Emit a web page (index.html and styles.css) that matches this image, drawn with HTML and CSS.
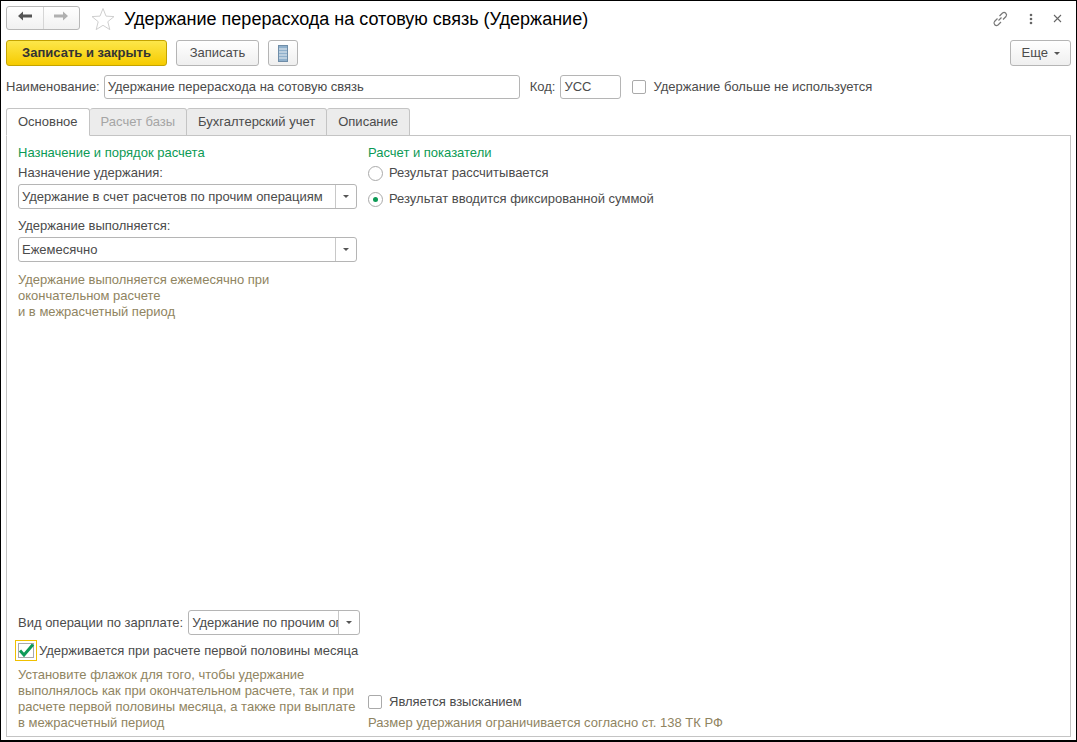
FILE: index.html
```html
<!DOCTYPE html>
<html lang="ru">

<head>
    <meta charset="UTF-8">
    <title>Удержание перерасхода на сотовую связь (Удержание)</title>
    <link rel="stylesheet" href="styles.css">
</head>

<body>
    <div class="window">
        <!--заголовок-->
        <header class="title-bar">
            <div class="nav-group">
                <button class="nav-btn">
                    <svg width="16" height="12" viewBox="0 0 16 12"><path d="M1 6l5-4.5V4.5h9v3H6v3z" fill="#555"/></svg>
                </button>
                <button class="nav-btn">
                    <svg width="16" height="12" viewBox="0 0 16 12"><path d="M15 6l-5-4.5V4.5H1v3h9v3z" fill="#b0b0b0"/></svg>
                </button>
            </div>
            <svg class="star" width="24" height="24" viewBox="0 0 24 24"><path d="M12 1.5l3 7.6 8 .5-6.200 5.100 2 7.900L12 18.300l-6.800 4.300 2-7.900L1 9.600l8-.5z" fill="#fff" stroke="#cfcfcf"/></svg>
            <h1 class="title">Удержание перерасхода на сотовую связь (Удержание)</h1>
            <div class="title-tools">
                <svg width="18" height="18" viewBox="0 0 18 18" fill="none" stroke="#777" stroke-width="1.200"><path d="M7.500 10.500l3-3M6.500 8.500l-3 3a2.500 2.500 0 0 0 3.500 3.500l3-3M8.500 6l3-3a2.500 2.500 0 0 1 3.500 3.500l-3 3"/></svg>
                <svg width="4" height="12" viewBox="0 0 4 12" fill="#666"><circle cx="2" cy="2" r="1.300"/><circle cx="2" cy="6" r="1.300"/><circle cx="2" cy="10" r="1.300"/></svg>
                <svg width="9" height="9" viewBox="0 0 9 9" stroke="#666" stroke-width="1.100"><path d="M1 1l7 7M8 1L1 8"/></svg>
            </div>
        </header>

        <!--командная панель-->
        <div class="command-bar">
            <button class="btn btn-primary">Записать и закрыть</button>
            <button class="btn btn-save">Записать</button>
            <button class="btn btn-icon">
                <svg width="10" height="17" viewBox="0 0 10 17"><rect x=".5" y=".5" width="9" height="16" fill="#8fb0cc" stroke="#6f8da8"/><path d="M1 4h8M1 7h8M1 10h8M1 13h8" stroke="#e8eef3"/></svg>
            </button>
            <button class="btn btn-more">Еще <i class="caret"></i></button>
        </div>

        <!--шапка-->
        <div class="head-row">
            <label class="label">Наименование:</label>
            <div class="field field-name">Удержание перерасхода на сотовую связь</div>
            <label class="label label-code">Код:</label>
            <div class="field field-code">УСС</div>
            <span class="check"></span>
            <span class="label">Удержание больше не используется</span>
        </div>

        <!--закладки-->
        <div class="tabs">
            <div class="tab tab-active">Основное</div>
            <div class="tab tab-disabled">Расчет базы</div>
            <div class="tab">Бухгалтерский учет</div>
            <div class="tab">Описание</div>
        </div>

        <section class="panel">
            <div class="col col-left">
                <h2 class="group-title">Назначение и порядок расчета</h2>
                <div class="label stack-label">Назначение удержания:</div>
                <div class="select select-full">
                    <span class="select-text">Удержание в счет расчетов по прочим операциям</span>
                    <span class="select-arrow"><i class="caret"></i></span>
                </div>
                <div class="label stack-label second">Удержание выполняется:</div>
                <div class="select select-full">
                    <span class="select-text">Ежемесячно</span>
                    <span class="select-arrow"><i class="caret"></i></span>
                </div>
                <p class="hint hint-period">Удержание выполняется ежемесячно при<br>окончательном расчете<br>и в межрасчетный период</p>

                <div class="col-bottom">
                    <div class="op-row">
                        <span class="label">Вид операции по зарплате:</span>
                        <div class="select select-op">
                            <span class="select-text">Удержание по прочим операциям</span>
                            <span class="select-arrow"><i class="caret"></i></span>
                        </div>
                    </div>
                    <div class="check-row">
                        <span class="check-focus">
                            <svg width="17" height="15" viewBox="0 0 17 15"><path d="M2 7.500l4 4.500L15 1.500" fill="none" stroke="#0f9a58" stroke-width="3"/></svg>
                        </span>
                        <span class="label">Удерживается при расчете первой половины месяца</span>
                    </div>
                    <p class="hint">Установите флажок для того, чтобы удержание<br>выполнялось как при окончательном расчете, так и при<br>расчете первой половины месяца, а также при выплате<br>в межрасчетный период</p>
                </div>
            </div>

            <div class="col col-right">
                <h2 class="group-title">Расчет и показатели</h2>
                <div class="radio-row">
                    <span class="radio"></span>
                    <span class="label">Результат рассчитывается</span>
                </div>
                <div class="radio-row radio-row-second">
                    <span class="radio radio-on"></span>
                    <span class="label">Результат вводится фиксированной суммой</span>
                </div>

                <div class="col-bottom">
                    <div class="check-row-plain">
                        <span class="check"></span>
                        <span class="label">Является взысканием</span>
                    </div>
                    <p class="hint">Размер удержания ограничивается согласно ст. 138 ТК РФ</p>
                </div>
            </div>
        </section>
    </div>
</body>

</html>
```

FILE: styles.css
```css
html,
body,
h1,
h2,
p {
    margin: 0;
    padding: 0;
}

html,
body {
    width: 1077px;
    height: 742px;
    overflow: hidden;
    background: #000;
}

body {
    color: #4b4b4b;
    font: 13px/16px "Liberation Sans", Arial, sans-serif;
}

/*окно*/
.window {
    display: flex;
    flex-direction: column;
    box-sizing: border-box;
    width: 1075px;
    height: 739px;
    margin: 1px 0 0 1px;
    padding: 0 5px 3px;
    background: #fff;
}

/*заголовок*/
.title-bar {
    display: flex;
    align-items: center;
    height: 35px;
    flex: none;
}

.nav-group {
    display: flex;
    box-sizing: border-box;
    width: 74px;
    height: 24px;
    margin-top: -2px;
    border: 1px solid #b8b8b8;
    border-radius: 3px;
    background: linear-gradient(#fff, #f1f1f1);
}

.nav-btn {
    flex: 1;
    padding: 0;
    border: 0;
    background: none;
}

.nav-btn + .nav-btn {
    border-left: 1px solid #d6d6d6;
}

.star {
    margin-left: 11px;
}

.title {
    margin-left: 9px;
    color: #000;
    font: normal 18px/24px "Liberation Sans", Arial, sans-serif;
}

.title-tools {
    display: flex;
    align-items: center;
    gap: 20px;
    margin-left: auto;
    padding-right: 9px;
}

/*командная панель*/
.command-bar {
    display: flex;
    align-items: center;
    flex: none;
    height: 26px;
    margin-top: 4px;
}

.btn {
    box-sizing: border-box;
    height: 26px;
    padding: 0;
    border: 1px solid #b5b5b5;
    border-radius: 3px;
    background: linear-gradient(#fff, #efefef);
    color: #4b4b4b;
    font: 13px/16px "Liberation Sans", Arial, sans-serif;
}

.btn-primary {
    width: 161px;
    border-color: #c4a400;
    background: linear-gradient(#fde74a, #f6cb00);
    color: #333;
    font-weight: bold;
}

.btn-save {
    width: 83px;
    margin-left: 9px;
}

.btn-icon {
    display: flex;
    align-items: center;
    justify-content: center;
    width: 30px;
    margin-left: 9px;
}

.btn-more {
    width: 61px;
    margin-left: auto;
}

.caret {
    display: inline-block;
    width: 0;
    height: 0;
    margin-left: 2px;
    border: 3px solid transparent;
    border-top: 3px solid #555;
    border-bottom: 0;
    vertical-align: 2px;
}

/*шапка*/
.head-row {
    display: flex;
    align-items: center;
    flex: none;
    height: 24px;
    margin-top: 9px;
}

.label {
    white-space: nowrap;
}

.field {
    box-sizing: border-box;
    height: 24px;
    padding: 0 3px;
    border: 1px solid #b5b5b5;
    border-radius: 3px;
    line-height: 22px;
    background: #fff;
}

.field-name {
    width: 416px;
    margin-left: 4px;
}

.label-code {
    margin-left: 10px;
}

.field-code {
    width: 61px;
    margin-left: 5px;
}

.check {
    flex: none;
    box-sizing: border-box;
    width: 14px;
    height: 14px;
    margin: 0 7px 0 11px;
    border: 1px solid #aaa;
    border-radius: 2px;
    background: #fff;
}

/*закладки*/
.tabs {
    display: flex;
    flex: none;
    height: 27px;
    margin: 9px 0 0 0;
}

.tab {
    box-sizing: border-box;
    height: 28px;
    padding: 0 11px;
    border: 1px solid #c4c4c4;
    border-left: 0;
    border-radius: 3px 3px 0 0;
    background: #ececec;
    line-height: 26px;
}

.tab-active {
    position: relative;
    z-index: 1;
    border-left: 1px solid #c4c4c4;
    border-bottom-color: #fff;
    background: #fff;
}

.tab-disabled {
    color: #a5a5a5;
}

/*основная панель*/
.panel {
    display: flex;
    flex: 1;
    box-sizing: border-box;
    min-height: 0;
    border: 1px solid #c4c4c4;
}

.col {
    display: flex;
    flex-direction: column;
}

.col-left {
    width: 339px;
    margin-left: 11px;
}

.col-right {
    flex: 1;
    margin-left: 11px;
}

.col-bottom {
    margin-top: auto;
}

.group-title {
    margin-top: 9px;
    color: #0c9a55;
    font: normal 13px/16px "Liberation Sans", Arial, sans-serif;
}

.stack-label {
    margin-top: 4px;
    margin-bottom: 3px;
}

.stack-label.second {
    margin-top: 9px;
}

.select {
    display: flex;
    box-sizing: border-box;
    height: 25px;
    border: 1px solid #b5b5b5;
    border-radius: 3px;
    background: #fff;
}

.select-full {
    width: 339px;
}

.select-op {
    width: 172px;
    margin-left: 5px;
}

.select-text {
    flex: 1;
    overflow: hidden;
    padding-left: 3px;
    line-height: 23px;
    white-space: nowrap;
}

.select-arrow {
    display: flex;
    flex: none;
    align-items: center;
    justify-content: center;
    width: 20px;
    border-left: 1px solid #c8c8c8;
}

.select-arrow .caret {
    margin: 0;
}

.hint {
    color: #8f8461;
}

.hint-period {
    margin-top: 10px;
}

.op-row {
    display: flex;
    align-items: center;
}

.check-row {
    display: flex;
    align-items: center;
    margin-top: 5px;
    margin-left: -3px;
}

.check-focus {
    display: flex;
    flex: none;
    align-items: center;
    justify-content: center;
    box-sizing: border-box;
    width: 22px;
    height: 21px;
    margin-right: 2px;
    border: 1px solid #f0c000;
    box-shadow: inset 0 0 0 2px #fff, inset 0 0 0 3px #aaa;
}

.check-row + .hint {
    margin-top: 6px;
    margin-bottom: 5px;
}

.check-row-plain {
    display: flex;
    align-items: center;
}

.check-row-plain .check {
    margin-left: 0;
}

.check-row-plain + .hint {
    margin-top: 5px;
    margin-bottom: 5px;
}

/*переключатель*/
.radio-row {
    display: flex;
    align-items: center;
    margin-top: 4px;
}

.radio-row-second {
    margin-top: 10px;
}

.radio {
    position: relative;
    box-sizing: border-box;
    flex: none;
    width: 15px;
    height: 15px;
    margin-right: 6px;
    border: 1px solid #aaa;
    border-radius: 50%;
    background: #fff;
}

.radio-on::after {
    content: "";
    position: absolute;
    top: 4px;
    left: 4px;
    width: 5px;
    height: 5px;
    border-radius: 50%;
    background: #0c9a55;
}
```
